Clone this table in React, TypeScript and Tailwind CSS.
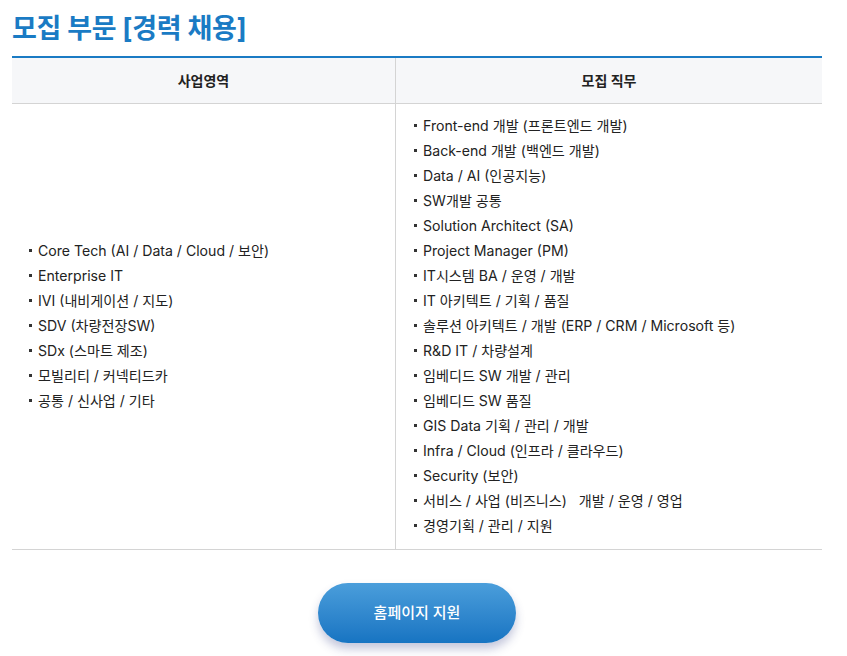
const areas = [
  'Core Tech (AI / Data / Cloud / 보안)',
  'Enterprise IT',
  'IVI (내비게이션 / 지도)',
  'SDV (차량전장SW)',
  'SDx (스마트 제조)',
  '모빌리티 / 커넥티드카',
  '공통 / 신사업 / 기타',
];

const jobs = [
  'Front-end 개발 (프론트엔드 개발)',
  'Back-end 개발 (백엔드 개발)',
  'Data / AI (인공지능)',
  'SW개발 공통',
  'Solution Architect (SA)',
  'Project Manager (PM)',
  'IT시스템 BA / 운영 / 개발',
  'IT 아키텍트 / 기획 / 품질',
  '솔루션 아키텍트 / 개발 (ERP / CRM / Microsoft 등)',
  'R&D IT / 차량설계',
  '임베디드 SW 개발 / 관리',
  '임베디드 SW 품질',
  'GIS Data 기획 / 관리 / 개발',
  'Infra / Cloud (인프라 / 클라우드)',
  'Security (보안)',
  '서비스 / 사업 (비즈니스)   개발 / 운영 / 영업',
  '경영기획 / 관리 / 지원',
];

const Item = ({ text }: { text: string }) => (
  <li className="flex items-center h-[25px]">
    <span className="w-[3px] h-[3px] bg-[#333] mr-[6px] shrink-0" />
    <span className="whitespace-pre">{text}</span>
  </li>
);

const App = () => {
  return (
    <div
      className="w-[847px] h-[656px] bg-white px-3 pt-[12px] text-[#222]"
      style={{ fontFamily: 'Inter, "Noto Sans CJK KR", sans-serif' }}
    >
      {/* Title */}
      <h1 className="text-[27px] font-bold text-[#1a7bc4] leading-[34px] tracking-[-0.3px]">모집 부문 [경력 채용]</h1>

      {/* Table */}
      <div className="w-[810px] mt-[10px] border-t-2 border-[#1a7bc4]">
        <div className="grid grid-cols-[384px_1fr] bg-[#f6f7f9] border-b border-[#d4d4d4] h-[46px] text-[14px] font-bold">
          <div className="flex items-center justify-center border-r border-[#d4d4d4]">사업영역</div>
          <div className="flex items-center justify-center">모집 직무</div>
        </div>
        <div className="grid grid-cols-[384px_1fr] border-b border-[#d4d4d4] text-[14.1px]">
          <div className="flex items-center pl-[17px] pb-[2px] border-r border-[#d4d4d4]">
            <ul>
              {areas.map((a) => <Item key={a} text={a} />)}
            </ul>
          </div>
          <div className="pl-[18px] pt-[9px] pb-[11px]">
            <ul>
              {jobs.map((j) => <Item key={j} text={j} />)}
            </ul>
          </div>
        </div>
      </div>

      {/* Button */}
      <div className="flex justify-center w-[810px] mt-[33px]">
        <button className="w-[198px] h-[60px] rounded-full bg-gradient-to-b from-[#4a9edb] to-[#1674c2] text-white text-[15px] font-medium shadow-[0_6px_10px_rgba(60,70,140,0.3)]">
          홈페이지 지원
        </button>
      </div>
    </div>
  );
};

export default App;
